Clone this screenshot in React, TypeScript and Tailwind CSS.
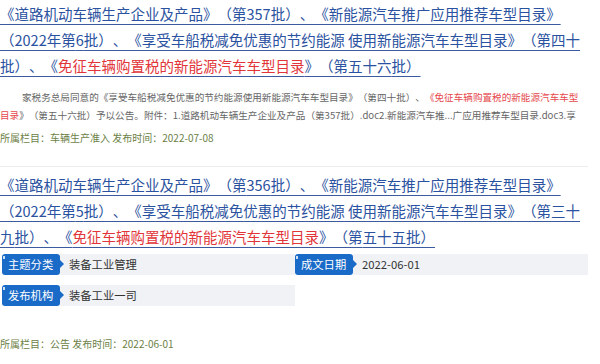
const FONT = "font-['Noto_Sans_CJK_SC',sans-serif] [text-spacing-trim:space-all]";

function Tag({ label }: { label: string }) {
  return (
    <div className="relative flex h-[21px] w-[58px] shrink-0 items-center rounded-[3px] bg-[#1a6bc8] pl-[6px] text-[11.3px] text-white">
      <span className="absolute left-[1px] top-[2px] h-[3px] w-[2px] bg-white/80" />
      {label}
      <span className="absolute right-[-4px] top-[6px] h-0 w-0 border-y-[4px] border-l-[4px] border-y-transparent border-l-[#1a6bc8]" />
    </div>
  );
}

function Field({ label, value }: { label: string; value: string }) {
  return (
    <div className="flex h-[21px] items-center">
      <Tag label={label} />
      <div className="flex h-full flex-1 items-center bg-[#f0f2f5] pl-[9px] text-[11.3px] text-[#333]">{value}</div>
    </div>
  );
}

function Title({ batch, year, hx, ex }: { batch: string; year: string; hx: string; ex: string }) {
  return (
    <a className="block pt-[1px] text-[14.5px] leading-[26px] text-[#2a52a0] underline decoration-[#3b5aa0] underline-offset-[4px]">
      《道路机动车辆生产企业及产品》（第{batch}批）、《新能源汽车推广应用推荐车型目录》（2022年第{year}批）、《享受车船税减免优惠的节约能源 使用新能源汽车车型目录》（第{hx}批）、《<span className="text-[#e2353a]">免征车辆购置税的新能源汽车车型目录</span>》（第{ex}批）
    </a>
  );
}

export default function App() {
  return (
    <div className={`w-[588px] bg-white ${FONT}`}>
      <Title batch="357" year="6" hx="四十" ex="五十六" />
      <div className="mt-[9px] text-[9.6px] leading-[18px] text-[#666]">
        <div className="overflow-hidden whitespace-nowrap pl-[22px]">
          家税务总局同意的《享受车船税减免优惠的节约能源使用新能源汽车车型目录》（第四十批）、<span className="text-[#e5484d]">《免征车辆购置税的新能源汽车车型</span>
        </div>
        <div className="overflow-hidden whitespace-nowrap">
          <span className="text-[#e5484d]">目录</span>》（第五十六批）予以公告。附件：1.道路机动车辆生产企业及产品（第357批）.doc2.新能源汽车推...广应用推荐车型目录.doc3.享
        </div>
      </div>
      <div className="mt-[6px] text-[10px] leading-[16px] text-[#6c7f47]">所属栏目：车辆生产准入 发布时间：2022-07-08</div>
      <div className="mt-[20px] h-px bg-[#ececec]" />
      <div className="mt-[4px]">
        <Title batch="356" year="5" hx="三十九" ex="五十五" />
      </div>
      <div className="mt-[4px] grid grid-cols-2 gap-y-[10px] pl-[2px]">
        <Field label="主题分类" value="装备工业管理" />
        <Field label="成文日期" value="2022-06-01" />
        <Field label="发布机构" value="装备工业一司" />
      </div>
      <div className="mt-[30px] text-[10px] leading-[16px] text-[#6c7f47]">所属栏目：公告 发布时间：2022-06-01</div>
    </div>
  );
}
